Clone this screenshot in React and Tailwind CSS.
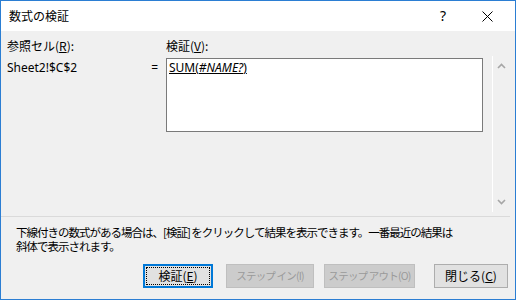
const Chevron = ({ up }) => (
  <svg width="9" height="6" viewBox="0 0 9 6" className="block">
    <polyline
      points={up ? '1,5 4.5,1.5 8,5' : '1,1 4.5,4.5 8,1'}
      fill="none"
      stroke="#a6a6a6"
      strokeWidth="1.6"
    />
  </svg>
)

function Btn({ children, w, className = '', focus, disabled }) {
  if (focus) {
    return (
      <div className={`${w} h-[24px] border-2 border-[#0078d7] bg-[#e1e1e1] p-[1px] ${className}`}>
        <div className="h-full w-full border border-dotted border-black flex items-center justify-center whitespace-nowrap">
          {children}
        </div>
      </div>
    )
  }
  return (
    <div
      className={`${w} h-[24px] border flex items-center justify-center whitespace-nowrap ${
        disabled ? 'border-[#bfbfbf] bg-[#cccccc] text-[#9a9a9a]' : 'border-[#adadad] bg-[#e1e1e1]'
      } ${className}`}
    >
      {children}
    </div>
  )
}

export default function App() {
  return (
    <div className="w-[516px] h-[300px] border border-[#2b7ed3] bg-[#f0f0f0] flex flex-col text-[12px] text-black font-['Noto_Sans','Noto_Sans_CJK_JP',sans-serif] leading-[16px] overflow-hidden">

      {/* Title bar */}
      <div className="h-[30px] bg-white flex items-center pl-[8px] shrink-0">
        <span className="font-['Noto_Sans_CJK_JP',sans-serif]">数式の検証</span>
        <span className="ml-auto text-[14px] mr-[36px]">?</span>
        <svg width="11" height="11" viewBox="0 0 11 11" className="mr-[22px]">
          <path d="M0.5 0.5 L10.5 10.5 M10.5 0.5 L0.5 10.5" stroke="#000" strokeWidth="1" />
        </svg>
      </div>

      {/* Top section */}
      <div className="flex h-[185px] shrink-0">
        <div className="w-[165px] pl-[6px] pt-[7px]">
          <div className="h-[16px] font-['Noto_Sans_CJK_JP',sans-serif]">参照セル(<span className="underline">R</span>):</div>
          <div className="flex mt-[6px] h-[16px]">
            <span>Sheet2!$C$2</span>
            <span className="ml-auto mr-[8px]">=</span>
          </div>
        </div>
        <div className="w-[317px] pt-[7px]">
          <div className="h-[16px] font-['Noto_Sans_CJK_JP',sans-serif]">検証(<span className="underline">V</span>):</div>
          <div className="mt-[4px] h-[74px] bg-white border border-[#7a7a7a] pl-[2px] pt-[1px]">
            <span className="underline">SUM(<i>#NAME?</i>)</span>
          </div>
        </div>
        <div className="ml-[9px] w-[17px] mt-[25px] mb-[4px] border-l border-white flex flex-col justify-between items-center py-[7px]">
          <Chevron up />
          <Chevron />
        </div>
      </div>

      {/* Separator */}
      <div className="h-px bg-[#dadada] mr-[5px] shrink-0" />

      {/* Message */}
      <div className="pl-[15px] pt-[8px] text-[11.5px] leading-[14px] font-['Noto_Sans_CJK_JP',sans-serif] tracking-[-1px]">
        <div className="whitespace-nowrap">下線付きの数式がある場合は、[検証] をクリックして結果を表示できます。一番最近の結果は</div>
        <div>斜体で表示されます。</div>
      </div>

      {/* Buttons */}
      <div className="flex pl-[142px] mt-[11px] font-['Noto_Sans_CJK_JP',sans-serif]">
        <Btn w="w-[70px]" focus>検証(<span className="underline">E</span>)</Btn>
        <Btn w="w-[88px]" className="ml-[13px]" disabled>
          <span className="text-[10.5px] tracking-[-0.8px]">ステップ&nbsp;イン(I)</span>
        </Btn>
        <Btn w="w-[91px]" className="ml-[10px]" disabled>
          <span className="text-[10.5px] tracking-[-0.8px]">ステップ&nbsp;アウト(O)</span>
        </Btn>
        <Btn w="w-[74px]" className="ml-[19px]">閉じる(<span className="underline">C</span>)</Btn>
      </div>
    </div>
  )
}
